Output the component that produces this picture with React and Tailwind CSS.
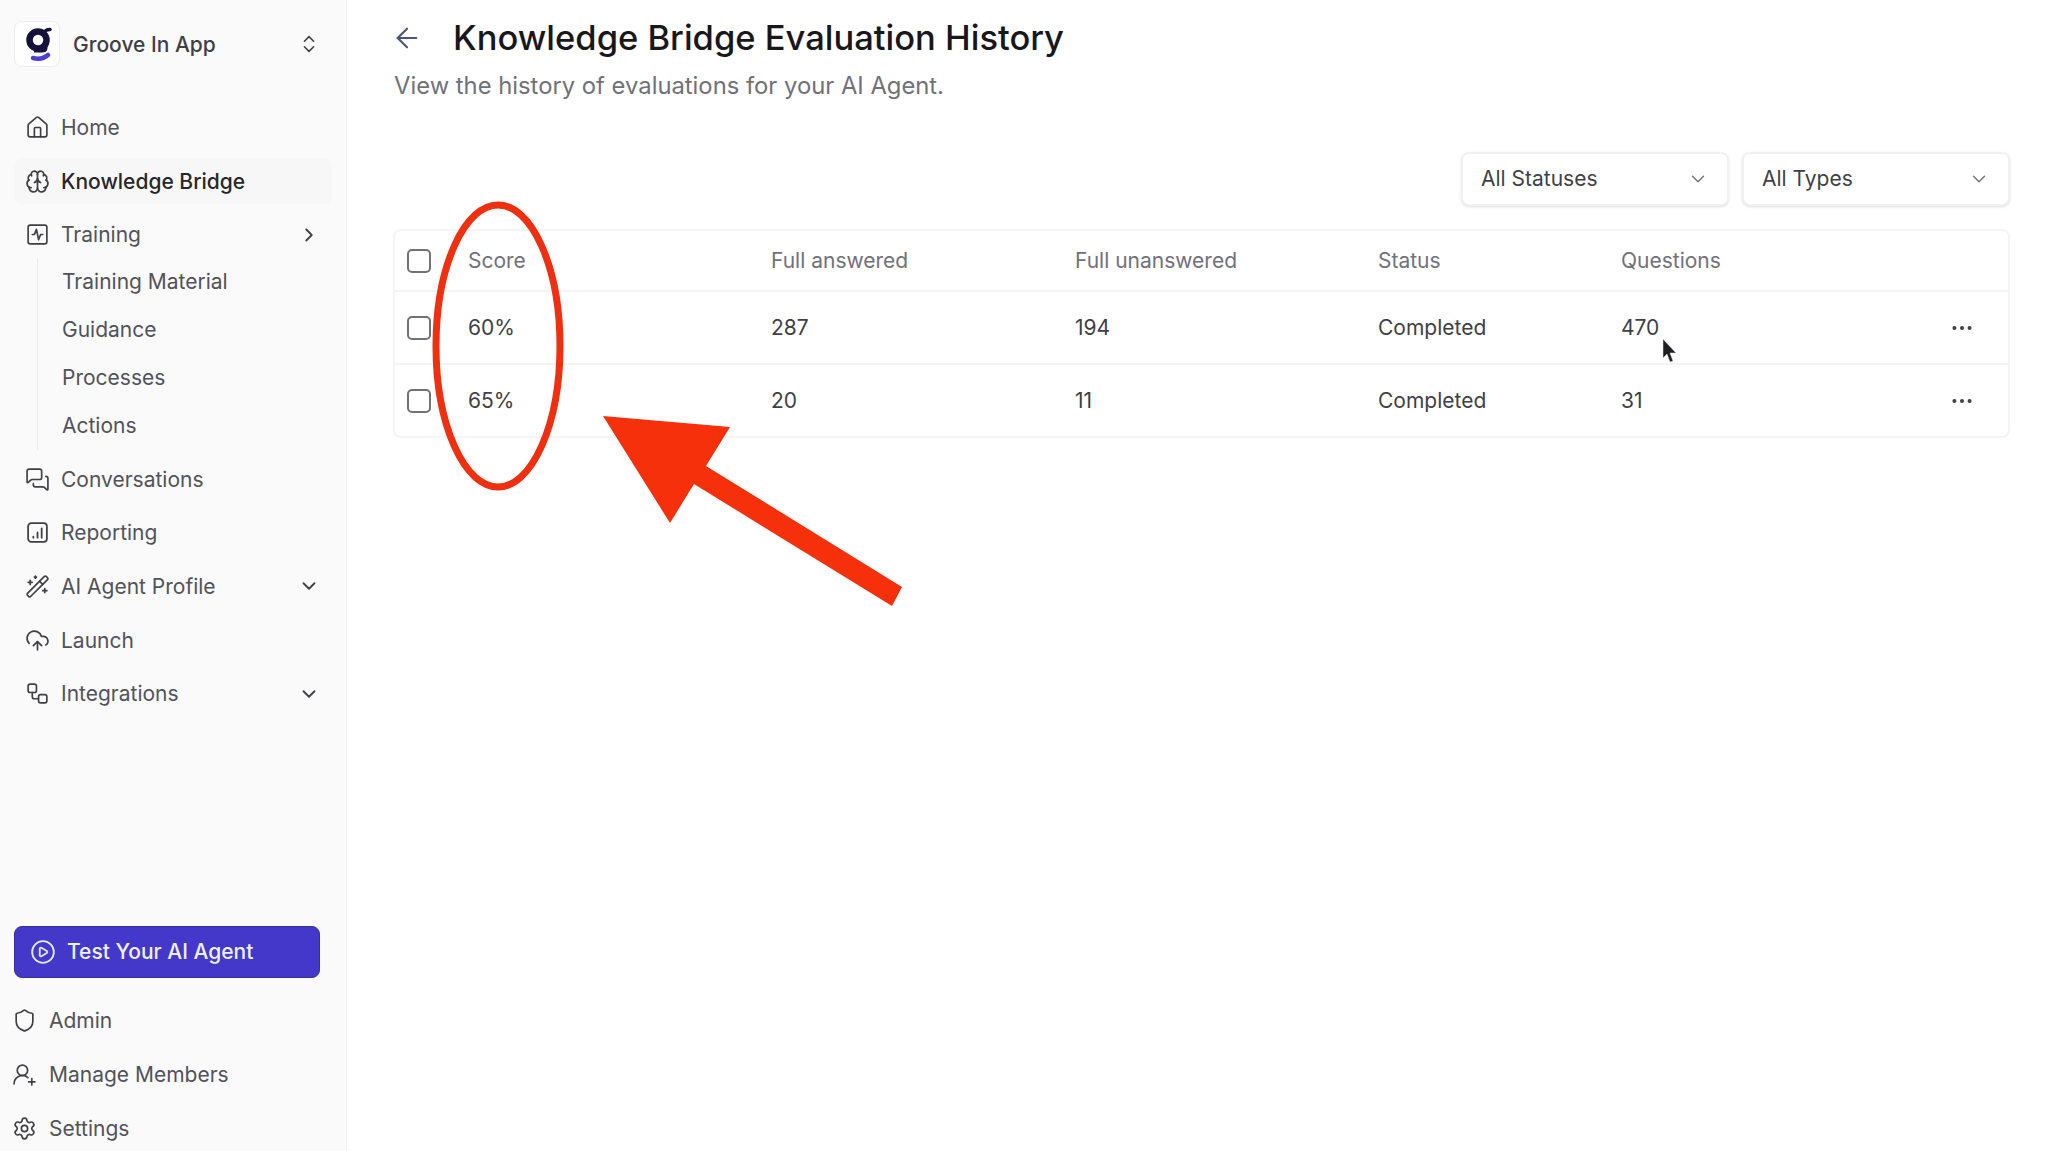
import React from "react";
import { House, Brain, SquareActivity, ChevronRight, ChevronDown, ChevronsUpDown, MessagesSquare, WandSparkles, CloudUpload, Workflow, CirclePlay, Shield, UserRoundPlus, Settings, ArrowLeft, Ellipsis } from "lucide-react";

const ReportIcon = ({ className }) => (
  <svg className={className} viewBox="0 0 24 24" fill="none" stroke="currentColor" strokeWidth="1.7" strokeLinecap="round" strokeLinejoin="round">
    <rect x="3" y="3" width="18" height="18" rx="3" />
    <path d="M8 17v-1M12 17v-5M16 17V8" />
  </svg>
);

const Logo = () => (
  <svg viewBox="0 0 46 46" className="w-[46px] h-[46px]">
    <circle cx="23" cy="18" r="8.5" fill="none" stroke="#14123a" strokeWidth="6.500" />
    <path d="M29 11c1-3 3-3.500 6-3.500" fill="none" stroke="#14123a" strokeWidth="3.500" strokeLinecap="round" />
    <path d="M31 21v5c0 2-1 3-4 3h-8" fill="none" stroke="#14123a" strokeWidth="3" />
    <path d="M18 36c6 1.500 11 .5 15-3" fill="none" stroke="#4b3fd1" strokeWidth="4.500" strokeLinecap="round" />
  </svg>
);

function NavRow({ icon: Icon, label, active, chevron: Chevron }) {
  return (
    <div className={`flex items-center h-[46px] rounded-lg pl-[11px] pr-[12px] ${active ? "bg-[#f7f7f7]" : ""}`}>
      <Icon className="w-[25px] h-[25px] text-[#3f3f46] shrink-0" strokeWidth={1.6} />
      <span className={`ml-[11px] text-[21px] leading-none ${active ? "text-[#27272a] font-medium" : "text-[#52525b]"}`}>{label}</span>
      {Chevron && <Chevron className="ml-auto w-[22px] h-[22px] text-[#3f3f46]" strokeWidth={2} />}
    </div>
  );
}

function BottomRow({ icon: Icon, label }) {
  return (
    <div className="flex items-center h-[46px] pl-[12px]">
      <Icon className="w-[25px] h-[25px] text-[#3f3f46] shrink-0" strokeWidth={1.6} />
      <span className="ml-[12px] text-[21px] leading-none text-[#52525b]">{label}</span>
    </div>
  );
}

const Checkbox = () => <div className="w-6 h-6 rounded-[5px] border-2 border-[#71717a] bg-white" />;

function Row({ score, a, b, q, header }) {
  const text = header ? "text-[#71717a]" : "text-[#3f3f46]";
  return (
    <div className={`flex items-center text-[21px] ${text} ${header ? "h-[59px]" : "h-[73px] border-t-2 border-[#f4f4f5]"}`}>
      <div className="w-[73px] pl-[12px] shrink-0"><Checkbox /></div>
      <div className="w-[303px] shrink-0">{score}</div>
      <div className="w-[304px] shrink-0">{a}</div>
      <div className="w-[303px] shrink-0">{b}</div>
      <div className="w-[243px] shrink-0">{header ? "Status" : "Completed"}</div>
      <div className="flex-1">{q}</div>
      {!header && <Ellipsis className="w-[26px] h-[26px] mr-[33px] text-[#3f3f46]" strokeWidth={1.7} />}
    </div>
  );
}

function Select({ label }) {
  return (
    <div className="w-[268px] h-[54px] rounded-lg border-2 border-[#f1f1f3] shadow-sm bg-white flex items-center pl-[18px] pr-[18px] text-[21px] text-[#3f3f46]">
      {label}
      <ChevronDown className="ml-auto w-[22px] h-[22px] text-[#71717a]" strokeWidth={1.5} />
    </div>
  );
}

export default function App() {
  return (
    <div className="relative flex w-[2048px] h-[1151px] overflow-hidden bg-white" style={{ fontFamily: "Inter, 'Liberation Sans', sans-serif" }}>
      <aside className="w-[347px] h-full shrink-0 bg-[#fafafa] border-r border-[#f4f4f5] flex flex-col px-[14px]">
        <div className="flex items-center h-[46px] mt-[21px] pr-[12px]">
          <div className="w-[46px] h-[46px] rounded-lg bg-white border border-[#eeeeef] overflow-hidden"><Logo /></div>
          <span className="ml-[13px] text-[21px] leading-none font-medium text-[#3f3f46]">Groove In App</span>
          <ChevronsUpDown className="ml-auto w-[22px] h-[22px] text-[#3f3f46]" strokeWidth={1.7} />
        </div>
        <nav className="mt-[37.500px] flex flex-col gap-[7.6px]">
          <NavRow icon={House} label="Home" />
          <NavRow icon={Brain} label="Knowledge Bridge" active />
          <div>
            <NavRow icon={SquareActivity} label="Training" chevron={ChevronRight} />
            <div className="ml-[23px] border-l border-[#ececee] pl-[24px] mb-[-1px]">
              {["Training Material", "Guidance", "Processes", "Actions"].map((s) => (
                <div key={s} className="h-[48px] flex items-center text-[21px] leading-none text-[#52525b]">{s}</div>
              ))}
            </div>
          </div>
          <NavRow icon={MessagesSquare} label="Conversations" />
          <NavRow icon={ReportIcon} label="Reporting" />
          <NavRow icon={WandSparkles} label="AI Agent Profile" chevron={ChevronDown} />
          <NavRow icon={CloudUpload} label="Launch" />
          <NavRow icon={Workflow} label="Integrations" chevron={ChevronDown} />
        </nav>
        <div className="mt-auto flex flex-col">
          <div className="w-[306px] h-[52px] rounded-lg bg-[#4338ca] border border-[#3730a3] flex items-center pl-[15px] mb-[20px]">
            <CirclePlay className="w-[26px] h-[26px] text-[#e0e7ff]" strokeWidth={1.7} />
            <span className="ml-[11px] text-[21px] leading-none font-medium text-[#eef2ff]">Test Your AI Agent</span>
          </div>
          <div className="flex flex-col gap-[7.6px] -mx-[14px]">
            <BottomRow icon={Shield} label="Admin" />
            <BottomRow icon={UserRoundPlus} label="Manage Members" />
            <BottomRow icon={Settings} label="Settings" />
          </div>
        </div>
      </aside>

      <main className="flex-1 pl-[47px] pr-[38px] flex flex-col">
        <div className="flex items-center h-[40px] mt-[18px]">
          <ArrowLeft className="w-[32px] h-[32px] text-[#4a5578] -ml-[3px]" strokeWidth={1.6} />
          <h1 className="ml-[30px] text-[34.500px] leading-none font-medium text-[#18181b]">Knowledge Bridge Evaluation History</h1>
        </div>
        <p className="mt-[12px] text-[23.800px] leading-[32px] text-[#71717a]">View the history of evaluations for your AI Agent.</p>
        <div className="mt-[50px] flex justify-end gap-[13px]">
          <Select label="All Statuses" />
          <Select label="All Types" />
        </div>
        <div className="mt-[23px] -ml-[1px] rounded-lg border-2 border-[#f4f4f5] bg-white">
          <Row header score="Score" a="Full answered" b="Full unanswered" q="Questions" />
          <Row score="60%" a="287" b="194" q="470" />
          <Row score="65%" a="20" b="11" q="31" />
        </div>
      </main>

      <svg className="absolute left-0 top-0 w-[2048px] h-[1151px] pointer-events-none" viewBox="0 0 2048 1151">
        <ellipse cx="498" cy="346" rx="62" ry="141" fill="none" stroke="#ee2f10" strokeWidth="7" />
        <polygon fill="#f7300c" points="603,416 730,427 706,466 902,587 892,606 694,484 670,523" />
        <path d="M1663 339v19l4-4 3 8 3-1-3-8h6z" fill="#1f1f23" stroke="#e5e5e5" strokeWidth="0.5" />
      </svg>
    </div>
  );
}
